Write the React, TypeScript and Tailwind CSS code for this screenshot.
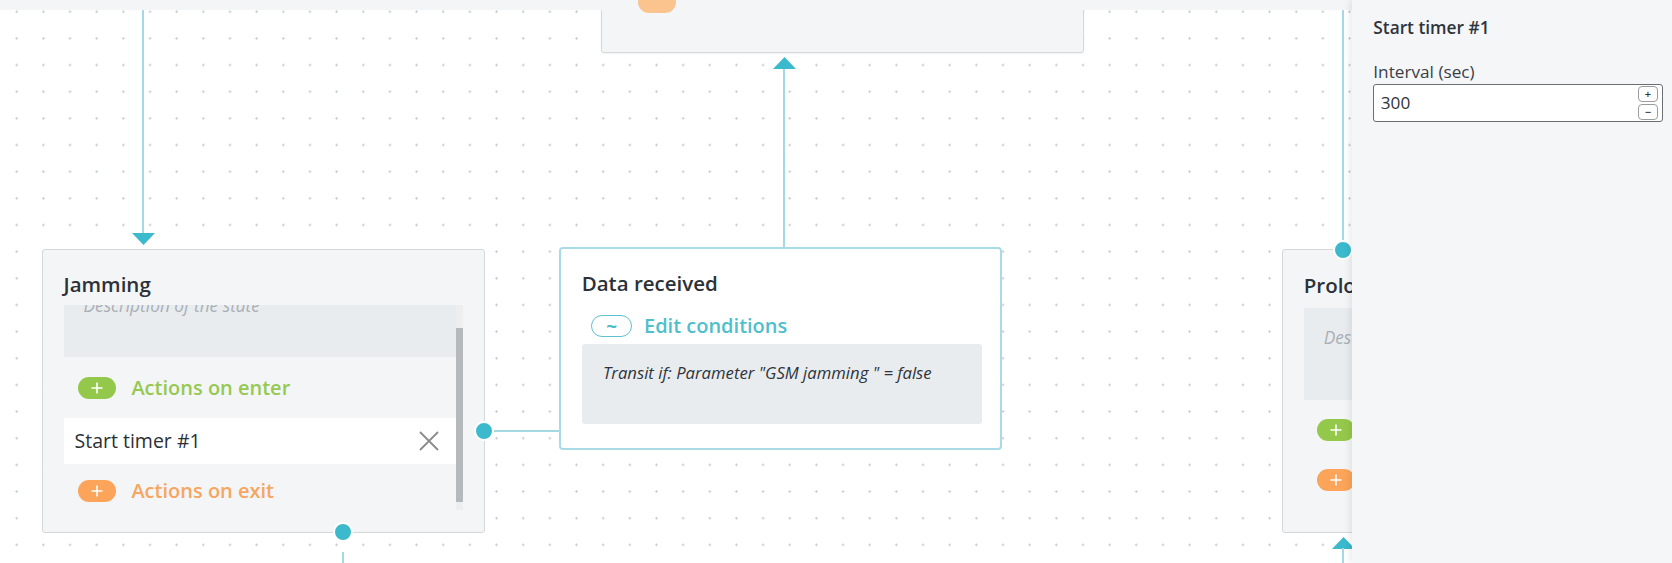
import React from "react";

function Dot({ className }: { className: string }) {
  return (
    <div
      className={`absolute z-10 h-5 w-5 -translate-x-1/2 -translate-y-1/2 rounded-full border-2 border-white bg-[#3bb9cd] ${className}`}
    />
  );
}

function ArrowDown({ className }: { className: string }) {
  return (
    <svg className={`absolute ${className}`} width="23" height="12" viewBox="0 0 23 12">
      <path d="M0 0H23L11.5 12Z" fill="#3bb9cd" />
    </svg>
  );
}

function ArrowUp({ className }: { className: string }) {
  return (
    <svg className={`absolute ${className}`} width="23" height="12" viewBox="0 0 23 12">
      <path d="M11.5 0L23 12H0Z" fill="#3bb9cd" />
    </svg>
  );
}

function PlusPill({ className }: { className: string }) {
  return (
    <span
      className={`flex h-[22px] w-[38px] shrink-0 items-center justify-center rounded-full text-white ${className}`}
    >
      <svg width="12" height="12" viewBox="0 0 12 12">
        <path d="M6 0.5V11.5M0.5 6H11.5" stroke="#fff" strokeWidth="1.6" />
      </svg>
    </span>
  );
}

function CloseIcon() {
  return (
    <svg width="20" height="20" viewBox="0 0 20 20">
      <path d="M1 1L19 19M19 1L1 19" stroke="#8b8b8b" strokeWidth="1.8" />
    </svg>
  );
}

function StateTitle({ children }: { children: React.ReactNode }) {
  return (
    <div className="h-[28px] shrink-0 whitespace-nowrap text-[20.5px] leading-[28px] font-semibold text-[#2b3137]">
      {children}
    </div>
  );
}

function JammingNode() {
  return (
    <div className="absolute left-[41.5px] top-[249px] flex h-[284px] w-[443px] flex-col rounded-[3px] border-[1.5px] border-[#d4d8db] bg-[#f4f5f7] px-[21px] pt-[19.5px]">
      <StateTitle>Jamming</StateTitle>
      <div className="mt-[7.7px] flex h-[205px] w-[399px] overflow-hidden">
        <div className="flex min-w-0 flex-1 flex-col">
          {/* description, scrolled so the placeholder is half hidden */}
          <div className="h-[52px] shrink-0 overflow-hidden bg-[#e9ecef] pl-5">
            <div className="-mt-[11.5px] whitespace-nowrap text-[17.3px] leading-[24px] italic text-[#a9afb6]">
              Description of the state
            </div>
          </div>
          <div className="flex h-[61px] shrink-0 items-center pl-[14.3px]">
            <PlusPill className="bg-[#94c84a]" />
            <span className="ml-[15.6px] text-[20px] leading-[28px] font-semibold text-[#96c951]">
              Actions on enter
            </span>
          </div>
          <div className="flex h-[46px] shrink-0 items-center justify-between bg-white pl-[11px] pr-[17px]">
            <span className="text-[19.5px] leading-[28px] text-[#2b3137]">Start timer #1</span>
            <CloseIcon />
          </div>
          <div className="flex h-[54px] shrink-0 items-center pl-[14.3px]">
            <PlusPill className="bg-[#fba45a]" />
            <span className="ml-[15.6px] text-[20px] leading-[28px] font-semibold text-[#f6a660]">
              Actions on exit
            </span>
          </div>
        </div>
        <div className="flex w-[6.6px] shrink-0 flex-col bg-[#eceeef]">
          <div className="mt-[22.6px] h-[174px] bg-[#b6b9bc]" />
        </div>
      </div>
    </div>
  );
}

function TransitionNode() {
  return (
    <div className="absolute left-[559px] top-[246.7px] flex h-[203.3px] w-[443.3px] flex-col rounded-[4px] border-2 border-[#a8dbe3] bg-white pl-[20.7px] pt-[20.5px]">
      <StateTitle>Data received</StateTitle>
      <div className="mt-[17.8px] flex h-[22.3px] items-center pl-[9.3px]">
        <span className="flex h-[22.3px] w-[41.3px] items-center justify-center rounded-full border-[1.5px] border-[#5cc2d0] text-[19px] leading-none font-bold text-[#4bbccc]">
          ~
        </span>
        <span className="ml-[11.7px] whitespace-nowrap text-[20px] leading-[28px] font-semibold text-[#4fbfcd]">
          Edit conditions
        </span>
      </div>
      <div className="mt-[6.7px] h-[80px] w-[400px] rounded-[3px] bg-[#e9ecef] pl-[21.3px] pt-[18.5px]">
        <div className="whitespace-nowrap text-[16.7px] leading-[22px] italic text-[#2f353b]">
          Transit if: Parameter "GSM jamming " = false
        </div>
      </div>
    </div>
  );
}

function ProlongedNode() {
  return (
    <div className="absolute left-[1281.7px] top-[249.3px] flex h-[283.4px] w-[443px] flex-col rounded-[3px] border-[1.5px] border-[#d4d8db] bg-[#f4f5f7] px-[21px] pt-[20.4px]">
      <StateTitle>Prolonged jamming</StateTitle>
      <div className="mt-[9.8px] h-[91.7px] shrink-0 bg-[#e9ecef] pl-5 pt-[17.3px]">
        <div className="whitespace-nowrap text-[17.3px] leading-[24px] italic text-[#a9afb6]">
          Description of the state
        </div>
      </div>
      <div className="mt-[19.3px] flex items-center pl-[13.7px]">
        <PlusPill className="bg-[#94c84a]" />
        <span className="ml-[15.6px] text-[20px] leading-[22px] font-semibold text-[#96c951]">
          Actions on enter
        </span>
      </div>
      <div className="mt-[27.3px] flex items-center pl-[13.7px]">
        <PlusPill className="bg-[#fba45a]" />
        <span className="ml-[15.6px] text-[20px] leading-[22px] font-semibold text-[#f6a660]">
          Actions on exit
        </span>
      </div>
    </div>
  );
}

function Canvas() {
  return (
    <div className="relative h-[563px] min-w-0 flex-1 overflow-hidden bg-white bg-[radial-gradient(circle,#c4c9ce_0.9px,transparent_1.4px)] bg-[size:26.67px_26.67px] bg-[position:3.4px_-1.6px]">
      {/* top strip */}
      <div className="absolute left-0 right-0 top-0 z-20 h-[10px] bg-[#f3f5f7]" />

      {/* node above, cut off */}
      <div className="absolute left-[601px] top-[-150px] h-[202.5px] w-[483.3px] rounded-[3px] border-[1.5px] border-[#d4d8db] bg-[#f4f5f7] shadow-[0_1px_2px_rgba(0,0,0,0.06)]" />
      <span className="absolute left-[638px] top-[-9px] z-30 h-[22px] w-[38px] rounded-full bg-[#fbc48f]" />

      {/* links */}
      <div className="absolute left-[142px] top-[10px] h-[223px] w-[2px] bg-[#a5d9e1]" />
      <ArrowDown className="left-[131.5px] top-[233px]" />

      <div className="absolute left-[782.5px] top-[68px] h-[179px] w-[2px] bg-[#a5d9e1]" />
      <ArrowUp className="left-[772.5px] top-[56.5px]" />

      <div className="absolute left-[494px] top-[430px] h-[2px] w-[66px] bg-[#a5d9e1]" />
      <div className="absolute left-[342.3px] top-[551.5px] h-[12px] w-[2px] bg-[#a5d9e1]" />

      <div className="absolute left-[1342px] top-[10px] h-[232px] w-[2px] bg-[#a5d9e1]" />
      <ArrowUp className="left-[1331.5px] top-[536.5px]" />
      <div className="absolute left-[1342px] top-[548px] h-[15px] w-[2px] bg-[#a5d9e1]" />

      <JammingNode />
      <TransitionNode />
      <ProlongedNode />

      <Dot className="left-[484.3px] top-[431px]" />
      <Dot className="left-[343.3px] top-[532.3px]" />
      <Dot className="left-[1343.3px] top-[250px]" />
    </div>
  );
}

function SidePanel() {
  return (
    <aside className="relative z-40 h-[563px] w-[320px] shrink-0 bg-[#f4f6f8] pl-[21.3px] pr-[9.3px] pt-[16.2px] shadow-[-3px_0_6px_rgba(0,0,0,0.07)]">
      <div className="h-[24px] text-[17.3px] leading-[24px] font-semibold text-[#2f343a]">Start timer #1</div>
      <div className="mt-[19.5px] h-[24px] text-[17.2px] leading-[24px] text-[#3b4046]">Interval (sec)</div>
      <div className="mt-[0.6px] flex h-[37.4px] items-center rounded-[3px] border border-[#6b6e72] bg-white pl-[6.5px] pr-[4px]">
        <span className="flex-1 text-[17.2px] leading-[24px] text-[#2f343a]">300</span>
        <div className="flex flex-col gap-[2.3px]">
          <span className="flex h-[15.3px] w-[19.7px] items-center justify-center rounded-[4px] border border-[#9a9da0] bg-white text-[11px] leading-none font-semibold text-[#333]">
            +
          </span>
          <span className="flex h-[15.7px] w-[19.7px] items-center justify-center rounded-[4px] border border-[#9a9da0] bg-white text-[11px] leading-none font-semibold text-[#333]">
            −
          </span>
        </div>
      </div>
    </aside>
  );
}

export default function App() {
  return (
    <div className="flex h-[563px] w-[1672px] overflow-hidden font-['Open_Sans',sans-serif]">
      <Canvas />
      <SidePanel />
    </div>
  );
}
